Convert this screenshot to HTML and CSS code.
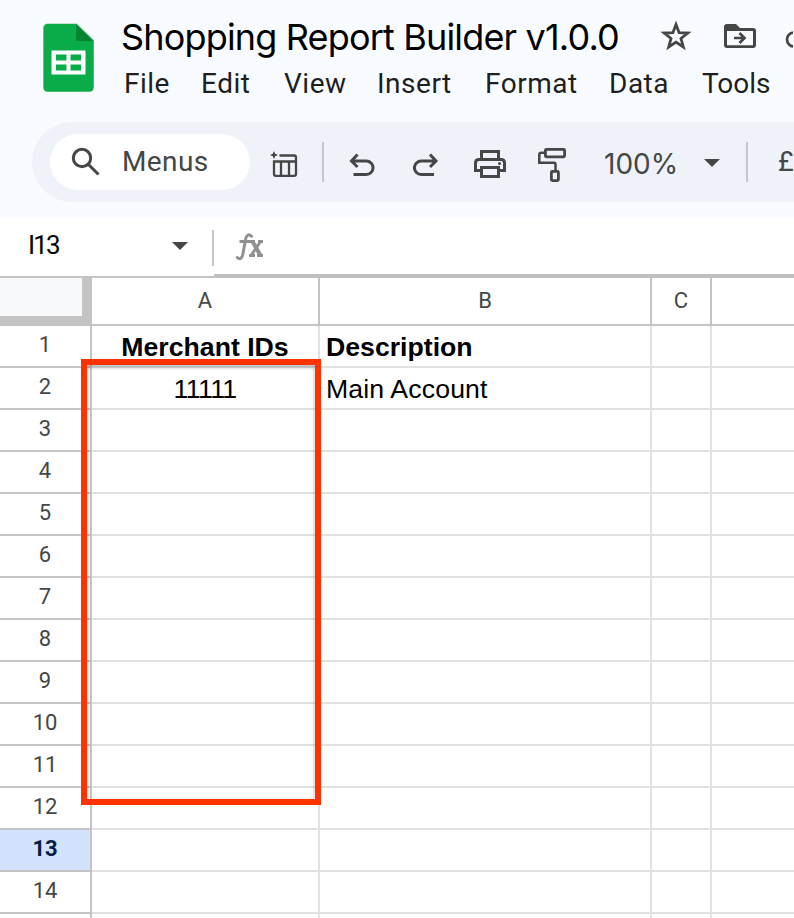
FILE: index.html
```
<!DOCTYPE html>
<html lang="en">
<head>
<meta charset="utf-8">
<title>Shopping Report Builder v1.0.0</title>
<link rel="stylesheet" href="styles.css">
</head>
<body>
<header class="top">
  <svg class="logo" width="52" height="70" viewBox="0 0 52 70"><path fill="#88ce9d" d="M5 .5h29L51 17v47q0 5-5 5H5q-5 0-5-5V5.500q0-5 5-5z"/><path fill="#09ac48" d="M5 1h28l17.500 17v46q0 4.500-4.500 4.500H5Q.7 68.500.7 64V5.500Q.7 1 5 1z"/><path fill="#058431" d="M33 1v17h17.500z"/><path fill="#fff" fill-rule="evenodd" d="M8.500 27.500h34v24h-34zM13 31.500v6h10.500v-6zM27.500 31.500v6H38v-6zM13 41.500v6h10.500v-6zM27.500 41.500v6H38v-6z"/></svg>
  <div class="heading">
    <div class="title-row">
      <h1 class="title">Shopping Report Builder v1.0.0</h1>
      <svg class="star" width="32" height="32" viewBox="0 0 32 32"><path fill="none" stroke="#444746" stroke-width="2.800" d="M16 4.500l3.100 8.200 8.700.4-6.800 5.400 2.300 8.500-7.300-4.800L8.700 27l2.300-8.500-6.800-5.400 8.700-.4z"/></svg>
      <svg class="folder" width="32" height="26" viewBox="0 0 32 26"><path fill="#444746" fill-rule="evenodd" d="M3 0h9l4 4h13q3 0 3 3v14q0 3-3 3H3q-3 0-3-3V3q0-3 3-3zM3 7v14.300h26V7z"/><path fill="none" stroke="#444746" stroke-width="2.700" d="M10 14h10M15.500 9l5 5-5 5"/></svg>
      <svg class="cloud" width="8" height="20" viewBox="0 0 8 20"><path fill="none" stroke="#444746" stroke-width="2.700" d="M9 2.500a6.800 6.800 0 0 0 0 14"/></svg>
    </div>
    <nav class="menu"><span>File</span><span>Edit</span><span>View</span><span>Insert</span><span>Format</span><span>Data</span><span class="tight">Tools</span></nav>
  </div>
</header>
<div class="toolbar">
  <div class="search">
    <svg width="30" height="30" viewBox="0 0 30 30"><g fill="none" stroke="#444746" stroke-width="3"><circle cx="11" cy="11" r="8.700"/><path d="M17 17l10.500 10.500"/></g></svg>
    <span>Menus</span>
  </div>
  <svg class="tables" width="28" height="28" viewBox="0 0 28 28"><g fill="none" stroke="#444746"><path stroke-width="2.300" d="M9.500 4.500H24q2 0 2 2V23q0 1.800-2 1.800H5.800Q4 24.800 4 23V10.500h22"/><path stroke-width="2.300" d="M11 11v13.500M19 11v13.500"/></g><path fill="#444746" d="M4 0l1.200 2.800L8 4 5.200 5.200 4 8 2.800 5.200 0 4l2.800-1.200z"/></svg>
  <i class="sep"></i>
  <svg class="undo" width="26" height="24" viewBox="0 0 26 24"><path fill="none" stroke="#444746" stroke-width="3" d="M8.500 1.500L2.500 8l6 6M2.500 8h14.800a6.700 6.700 0 0 1 0 13.500H4.500"/></svg>
  <svg class="redo" width="26" height="24" viewBox="0 0 26 24"><path fill="none" stroke="#444746" stroke-width="3" d="M17 1.500L23 8l-6 6M23 8H8.200a6.700 6.700 0 0 0 0 13.500H21"/></svg>
  <svg class="print" width="32" height="28" viewBox="0 0 32 28"><g fill="none" stroke="#444746" stroke-width="3"><path d="M7.500 8.500v-7h17v7"/><path d="M7.500 20.500h-6V13q0-3.500 3.500-3.500h22q3.500 0 3.500 3.500v7.500h-6"/><path d="M7.500 17.500h17v9h-17z"/></g><circle cx="25.500" cy="13.500" r="1.500" fill="#444746"/></svg>
  <svg class="paint" width="28" height="34" viewBox="0 0 28 34"><g fill="none" stroke="#444746"><rect x="7.400" y="1.400" width="19.200" height="7.400" rx="1" stroke-width="2.800"/><rect x="13.400" y="23.400" width="7" height="9.200" rx="1" stroke-width="2.800"/><path stroke-width="2.500" d="M7 4.800H3.500Q1.300 4.800 1.300 7v7.700H16q1.500 0 1.500 1.500V23"/></g></svg>
  <span class="zoom">100%</span>
  <i class="caret"></i>
  <i class="sep sep-end"></i>
  <span class="currency">£</span>
</div>
<div class="formula">
  <div class="name-box"><span>I13</span><i class="caret"></i></div>
  <div class="input"><svg width="30" height="32" viewBox="0 0 30 32"><g fill="none" stroke="#919191"><path stroke-width="3" stroke-linecap="round" d="M16.500 5.200c-2.500-2.500-5-1.500-5.800 2.500L7.800 23.500c-.8 4-3 5.300-5.500 3"/><path stroke-width="3" d="M4.500 10.500H20M23 10.500h5M14 24.500h6M22 24.500h6"/><path stroke-width="4" d="M17.500 10.500l8 14"/><path stroke-width="3" d="M25.500 10.500L16 24.500"/></g></svg></div>
</div>
<main class="sheet">
  <div class="row head"><div class="corner"></div><div>A</div><div>B</div><div>C</div><div></div></div>
  <div class="row"><b class="num">1</b><div class="center strong">Merchant IDs</div><div class="strong">Description</div><div></div><div></div></div>
  <div class="row"><b class="num">2</b><div class="center ones">11111</div><div class="account">Main Account</div><div></div><div></div></div>
  <div class="row"><b class="num">3</b><div></div><div></div><div></div><div></div></div>
  <div class="row"><b class="num">4</b><div></div><div></div><div></div><div></div></div>
  <div class="row"><b class="num">5</b><div></div><div></div><div></div><div></div></div>
  <div class="row"><b class="num">6</b><div></div><div></div><div></div><div></div></div>
  <div class="row"><b class="num">7</b><div></div><div></div><div></div><div></div></div>
  <div class="row"><b class="num">8</b><div></div><div></div><div></div><div></div></div>
  <div class="row"><b class="num">9</b><div></div><div></div><div></div><div></div></div>
  <div class="row"><b class="num">10</b><div></div><div></div><div></div><div></div></div>
  <div class="row"><b class="num">11</b><div></div><div></div><div></div><div></div></div>
  <div class="row"><b class="num">12</b><div></div><div></div><div></div><div></div></div>
  <div class="row"><b class="num active">13</b><div></div><div></div><div></div><div></div></div>
  <div class="row"><b class="num">14</b><div></div><div></div><div></div><div></div></div>
  <div class="row"><b class="num"></b><div></div><div></div><div></div><div></div></div>
  <div class="highlight"></div>
</main>
</body>
</html>
```
FILE: styles.css
```
* { box-sizing: border-box; }
body { margin: 0; width: 794px; height: 918px; overflow: hidden; background: #f8fbff; font-family: Roboto, "Liberation Sans", sans-serif; color: #444746; }
svg { display: block; flex: none; }
span, h1 { white-space: nowrap; }
.top { display: flex; height: 122px; overflow: hidden; }
.logo { margin: 23px 0 0 43px; }
.heading { margin-left: 27px; flex: none; width: 672px; }
.title-row { display: flex; height: 62px; padding-top: 16px; }
.title { margin: -1px 0 0 -1px; width: 539px; flex: none; color: #000; font: 400 36px/44px Inter, sans-serif; letter-spacing: -0.83px; }
.star { margin-top: 4px; }
.folder { margin: 8px 0 0 32px; }
.cloud { margin: 14px 0 0 29px; }
.menu { display: grid; grid-template-columns: 77px 83px 93px 108px 124px 94px auto; padding-left: 2px; color: #1f1f1f; font-size: 28px; line-height: 44px; letter-spacing: .5px; }
.menu .tight { margin-left: -1px; letter-spacing: 0; }
.toolbar { display: flex; align-items: flex-start; height: 80px; margin-left: 32px; padding-left: 18px; background: #eff2f8; border-radius: 40px 0 0 40px; overflow: hidden; }
.search { display: flex; flex: none; width: 200px; height: 56px; margin-top: 12px; padding: 13px 0 0 21px; border-radius: 28px; background: #fff; }
.search span { margin: -7px 0 0 21px; font-size: 28px; line-height: 44px; letter-spacing: .4px; }
.tables { margin: 29px 0 0 20px; }
.sep { flex: none; width: 2px; height: 40px; margin: 20px 0 0 24px; background: #c7c7c7; }
.undo { margin: 31px 0 0 25px; }
.redo { margin: 31px 0 0 38px; }
.print { margin: 28px 0 0 35px; }
.paint { margin: 26px 0 0 32px; }
.zoom { width: 100px; flex: none; margin: 20px 0 0 38px; font: 400 28px/44px Inter, sans-serif; }
.caret { flex: none; border: 8px solid transparent; border-top-color: #444746; border-bottom: 0; }
.toolbar .caret { margin-top: 37px; }
.sep-end { margin-left: 26px; }
.currency { margin: 18px 0 0 30px; font-size: 27px; line-height: 44px; }
.formula { display: flex; height: 60px; margin-top: 16px; background: #fff; }
.name-box { display: flex; flex: none; width: 214px; padding: 6px 0 0 28px; border-bottom: 2px solid #c4c4c4; color: #000; font-size: 26px; line-height: 42px; background: linear-gradient(#c7c7c7, #c7c7c7) 212px 12px / 2px 36px no-repeat; }
.name-box span { width: 144px; letter-spacing: -1.8px; }
.name-box .caret { margin-top: 18px; }
.input { flex: 1; padding: 13px 0 0 21px; border-bottom: 4px solid #c0c0c0; }
.sheet { position: relative; background: #fff; }
.row { display: grid; grid-template-columns: 92px 228px 332px 60px 82px; grid-template-rows: 100%; height: 42px; }
.row > * { border-right: 2px solid #e1e1e1; border-bottom: 2px solid #e1e1e1; }
.row > div { padding-left: 6px; color: #000; font: 400 26.67px/42px "Liberation Sans", sans-serif; white-space: nowrap; }
.row > div:last-child { border-right: 0; }
.row > .center { padding: 0; text-align: center; }
.row > .strong { font-weight: 700; }
.row > .ones { letter-spacing: -.6px; }
.row > .account { letter-spacing: .13px; }
.row > .num { border-color: #c4c4c4; font-weight: 400; font-size: 22px; line-height: 37px; text-align: center; }
.row > .active { background: #d3e3fd; color: #041e49; font-weight: 700; }
.row.head { height: 48px; }
.row.head > div { padding: 0; border-color: #c4c4c4; color: #444746; font: 400 22px/46px Roboto, sans-serif; text-align: center; }
.row.head > .corner { border-width: 0 10px 10px 0; background: #f8f9fb; }
.highlight { position: absolute; left: 81px; top: 81px; width: 240px; height: 446px; border: 6px solid #ff3300; box-shadow: inset 0 2px 4px rgba(0,0,0,.3); }
```
